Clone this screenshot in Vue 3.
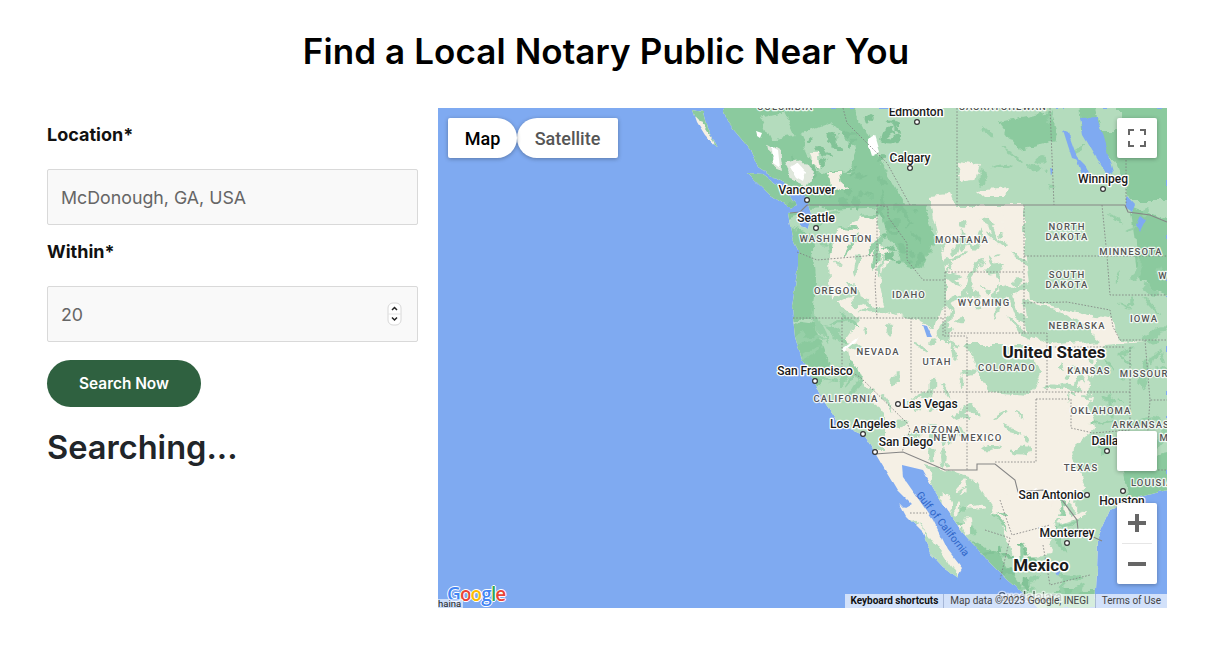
<script setup>
const land = 'M723 108 727 122 738 135 752 152 758 167 775 178 797 190 807 198 811 215 808 228 800 226 797 212 788 213 792 238 798 250 798 267 792 307 795 337 802 360 815 383 823 400 840 425 863 435 875 453 882 465 897 490 912 505 905 509 899 503 906 516 923 533 930 553 943 567 957 577 962 568 948 550 933 520 917 497 903 477 902 465 923 470 940 500 963 533 990 563 1007 580 1027 597 1037 608 1095 608 1097 570 1098 537 1110 510 1137 498 1167 490 1167 108Z M747 173 763 174 785 190 797 205 790 208 770 195Z M693 110 703 112 707 128 717 148 705 135 697 122Z'

const light = [
  'M800 100 1175 100 1175 345 1120 340 1110 320 1030 300 1024 250 1024 205 860 205Z',
  'M765 205 880 205 870 215 835 230 830 262 832 300 860 318 845 340 850 365 885 415 885 450 850 450 785 375 770 310Z',
  'M870 205 930 205 945 270 945 300 935 330 915 320 885 310 880 285 888 255Z',
  'M965 345 1030 345 1040 372 1030 395 990 392 975 370Z',
  'M1100 345 1175 340 1175 500 1120 515 1105 540 1105 615 1030 615 950 540 925 465 945 470 975 480 1000 520 1015 560 1050 555 1060 510 1085 490 1070 450 1095 430 1090 400Z',
  'M1024 300 1060 310 1100 340 1050 345 1030 335Z',
  'M925 530 950 565 965 585 945 575 920 545Z',
  'M895 510 925 530 905 522Z',
]
const mid = [
  'M685 100 850 100 880 160 905 205 810 210 785 218 735 175Z',
  'M877 205 925 205 935 240 925 270 905 265 890 240Z',
  'M780 225 812 235 815 280 812 320 780 320Z',
  'M780 320 815 325 832 372 815 390Z',
  'M1080 100 1175 100 1175 200 1130 200 1115 160 1082 130Z',
  'M1000 122 1050 112 1060 140 1020 150Z',
  'M1130 205 1175 222 1175 300 1140 280Z',
  'M1122 462 1175 450 1175 495 1130 502Z',
  'M945 525 1000 555 1040 615 1000 615 965 570 945 520Z',
  'M1050 590 1100 590 1100 612 1045 612Z',
]
const lightOver = [
  'M800 135 830 122 858 150 850 172 815 170Z',
  'M760 118 785 112 795 135 770 140Z',
  'M1095 108 1120 108 1120 130 1100 130Z',
]
const tan = [
  'M957 163 980 166 975 180 958 182Z',
  'M930 195 950 193 955 205 930 205Z',
  'M977 190 1007 187 1005 197 985 197Z',
  'M828 172 842 172 845 192 832 190Z',
  'M810 152 818 152 821 168 813 166Z',
  'M1000 495 1050 490 1055 530 1030 555 1015 530Z',
  'M1000 205 1022 205 1022 250 1005 230Z',
  'M1070 395 1090 400 1075 440 1060 445Z',
]
const snow = [
  'M772 147 778 150 780 168 773 163Z',
  'M790 167 798 163 806 172 803 181 796 177Z',
  'M867 140 875 135 880 152 872 156Z',
  'M756 130 762 132 760 137 757 135Z',
  'M858 338 860 335 856 342 844 352 842 349Z',
  'M1033 490 1036 488 1038 498 1034 497Z',
]
const water = [
  'M1080 118 1097 117 1113 172 1107 175 1083 135Z',
  'M1063 130 1068 132 1078 160 1072 158Z',
  'M1075 155 1085 165 1092 180 1082 175Z',
  'M1126 195 1135 205 1132 212 1126 208Z',
  'M923 325 927 326 932 337 927 337Z',
  'M1140 215 1146 220 1140 232 1136 225Z',
  'M1050 167 1053 170 1051 176Z',
  'M1055 570 1060 572 1058 576Z',
]

let seed = 7
const rnd = () => {
  seed = (seed * 16807) % 2147483647
  return seed / 2147483647
}
const streaks = (x, y, w, h, n, maxLen = 14) => {
  const out = []
  for (let i = 0; i < n; i++) {
    const cx = x + rnd() * w
    const cy = y + rnd() * h
    const len = 3 + rnd() * maxLen
    const wid = 1.2 + rnd() * 2.5
    const a = rnd() * 3.14
    const pts = []
    for (let k = 0; k < 8; k++) {
      const t = (k / 8) * 6.283
      const px = Math.cos(t) * len
      const py = Math.sin(t) * wid
      pts.push(`${(cx + px * Math.cos(a) - py * Math.sin(a)).toFixed(1)} ${(cy + px * Math.sin(a) + py * Math.cos(a)).toFixed(1)}`)
    }
    out.push(`M${pts.join(' ')}Z`)
  }
  return out.join(' ')
}
const lightStreaks = [
  streaks(925, 210, 100, 90, 34),
  streaks(835, 255, 50, 60, 12),
  streaks(845, 320, 125, 120, 30, 9),
  streaks(945, 275, 80, 60, 12),
  streaks(910, 395, 130, 70, 22, 8),
  streaks(1040, 350, 60, 60, 14),
].join(' ')
const midStreaks = [
  streaks(960, 110, 120, 80, 12, 18),
  streaks(1110, 210, 57, 140, 14, 10),
  streaks(1100, 350, 67, 130, 20),
  streaks(960, 500, 120, 105, 26),
  streaks(800, 320, 60, 80, 14),
  streaks(820, 210, 60, 50, 10),
].join(' ')
const tanStreaks = [
  streaks(1040, 490, 40, 50, 8),
  streaks(945, 480, 50, 50, 8),
].join(' ')
const darkStreaks = [
  streaks(790, 120, 110, 90, 40, 6),
  streaks(880, 210, 45, 60, 22, 6),
  streaks(985, 540, 50, 60, 16, 5),
].join(' ')

const dashes = [
  '797 252 817 260 877 255', '877 205 877 255 875 282 877 318', '793 318 943 318',
  '842 318 842 367 860 377 907 423 910 430 902 452', '911 318 911 392', '911 392 1130 392',
  '967 337 967 470', '943 318 943 336 967 336', '877 205 888 207 888 217 907 243 907 260 923 280 945 280',
  '945 272 1024 272 1024 333 945 333 945 272', '1024 205 1024 272', '1024 256 1107 256',
  '1102 205 1107 256 1110 295 1167 295', '1024 303 1067 302 1110 310 1113 327 1120 340 1167 340',
  '1024 333 1047 333 1047 347 1125 347', '1047 347 1047 392', '1130 347 1130 430',
  '1036 399 1036 462 995 462', '1036 399 1071 399 1071 428 1093 433 1130 430',
  '843 108 847 123 887 163 910 205', '957 108 957 205', '1050 108 1054 205', '1126 160 1126 205',
  '910 513 927 513', '1000 500 1012 535 1050 525', '985 530 1010 538 1000 580', '1043 545 1050 585 1090 575',
  '1145 340 1150 400 1167 400', '1150 400 1145 470 1167 470', '1107 256 1167 256',
]
const solids = [
  '807 205 1125 205 1128 212 1150 215 1167 222', '790 213 800 212 807 205',
  '875 454 903 452 945 470 977 470 977 464 995 464 1015 480 1018 492 1043 490 1062 500 1077 520 1078 530 1102 541',
]

const cities = [
  ['Edmonton', 916, 116, 917, 122], ['Calgary', 910, 162, 910, 168], ['Vancouver', 807, 194, 807, 200],
  ['Seattle', 816, 222, 816, 228], ['Winnipeg', 1103, 183, 1103, 189], ['San Francisco', 815, 375, 815, 381],
  ['Las Vegas', 930, 408, 898, 404], ['Los Angeles', 863, 428, 863, 434], ['San Diego', 906, 446, 875, 452],
  ['Dallas', 1108, 445, 1107, 451], ['Houston', 1122, 505, 1123, 491], ['San Antonio', 1051, 499, 1087, 495],
  ['Monterrey', 1067, 537, 1067, 543],
]
const states = [
  ['COLUMBIA', 785, 110], ['SASKATCHEWAN', 1003, 110], ['WASHINGTON', 836, 242], ['MONTANA', 962, 243],
  ['NORTH', 1067, 230], ['DAKOTA', 1067, 240], ['MINNESOTA', 1131, 255], ['SOUTH', 1067, 278], ['DAKOTA', 1067, 288],
  ['OREGON', 836, 294], ['IDAHO', 909, 298], ['WYOMING', 984, 306], ['NEBRASKA', 1077, 329], ['IOWA', 1144, 322],
  ['NEVADA', 878, 355], ['UTAH', 937, 365], ['COLORADO', 1007, 371], ['KANSAS', 1089, 374], ['MISSOURI', 1146, 377],
  ['CALIFORNIA', 846, 402], ['ARIZONA', 937, 433], ['NEW MEXICO', 968, 441], ['OKLAHOMA', 1101, 414],
  ['ARKANSAS', 1141, 428], ['TEXAS', 1081, 471], ['LOUISIANA', 1160, 486], ['WI', 1165, 279], ['MI', 1166, 441],
]
</script>

<template>
  <div class="page">
    <h1 class="title">Find a Local Notary Public Near You</h1>
    <div class="row">
      <form class="form" @submit.prevent>
        <label class="label">Location*</label>
        <input class="field" type="text" value="McDonough, GA, USA" readonly />
        <label class="label">Within*</label>
        <div class="numwrap">
          <input class="field" type="text" value="20" readonly />
          <span class="spin">
            <svg width="15" height="24" viewBox="0 0 15 24">
              <rect x="1" y="1" width="13" height="22" rx="5" fill="#fff" stroke="#d8d8d8" />
              <path d="M1 12H14" stroke="#e4e4e4" />
              <path d="M5 8 7.5 5.5 10 8M5 15.5 7.5 18 10 15.5" fill="none" stroke="#222" stroke-width="1.5" />
            </svg>
          </span>
        </div>
        <button class="search" type="button">Search Now</button>
        <h2 class="status">Searching...</h2>
      </form>

      <div class="map">
        <svg class="terrain" width="729" height="500" viewBox="438 108 729 500">
          <defs>
            <filter id="rough" filterUnits="userSpaceOnUse" x="438" y="108" width="729" height="500">
              <feTurbulence type="fractalNoise" baseFrequency="0.06" numOctaves="3" seed="4" />
              <feDisplacementMap in="SourceGraphic" scale="11" xChannelSelector="R" yChannelSelector="G" />
            </filter>
            <filter id="soft" filterUnits="userSpaceOnUse" x="430" y="100" width="745" height="516">
              <feTurbulence type="fractalNoise" baseFrequency="0.09" numOctaves="2" seed="9" />
              <feDisplacementMap in="SourceGraphic" scale="4" xChannelSelector="R" yChannelSelector="G" />
            </filter>
            <clipPath id="landclip"><path :d="land" /></clipPath>
          </defs>
          <rect x="438" y="108" width="729" height="500" fill="#7faaf1" />
          <g filter="url(#soft)">
            <path :d="land" fill="#f5f0e5" />
            <g clip-path="url(#landclip)">
              <g filter="url(#rough)">
                <path v-for="(d, i) in light" :key="'l' + i" :d="d" fill="#b4dcbd" />
                <path :d="lightStreaks" fill="#b4dcbd" />
                <path v-for="(d, i) in mid" :key="'m' + i" :d="d" fill="#8bca9e" />
                <path :d="midStreaks" fill="#97d0a8" />
                <path v-for="(d, i) in lightOver" :key="'o' + i" :d="d" fill="#b4dcbd" />
                <path :d="darkStreaks" fill="#82c397" />
                <path v-for="(d, i) in tan" :key="'t' + i" :d="d" fill="#f5f0e5" />
                <path :d="tanStreaks" fill="#f5f0e5" />
                <path d="M767 143 779 150 782 170 770 165Z M786 162 800 158 812 172 806 186 792 180Z" fill="#dfe7dc" />
              </g>
              <path v-for="(d, i) in snow" :key="'s' + i" :d="d" fill="#fff" />
            </g>
            <path v-for="(d, i) in water" :key="'w' + i" :d="d" fill="#7faaf1" />
          </g>
          <polyline v-for="(p, i) in dashes" :key="'d' + i" class="dash" :points="p" />
          <polyline v-for="(p, i) in solids" :key="'b' + i" class="border" :points="p" />
          <text v-for="(s, i) in states" :key="'st' + i" class="state" :x="s[1]" :y="s[2]">{{ s[0] }}</text>
          <text class="gulf" transform="translate(940 526) rotate(52)">Gulf of California</text>
          <g v-for="c in cities" :key="c[0]">
            <text class="city" :x="c[1]" :y="c[2]">{{ c[0] }}</text>
            <circle class="dot" :cx="c[3]" :cy="c[4]" r="2.4" />
          </g>
          <text class="country" x="1054" y="358">United States</text>
          <text class="country" x="1041" y="571">Mexico</text>
          <text class="city faded" x="1030" y="601">Guadalajara</text>
        </svg>

        <div class="types">
          <button class="type type-map" type="button">Map</button>
          <button class="type type-sat" type="button">Satellite</button>
        </div>

        <button class="ctl ctl-full" type="button" aria-label="Fullscreen">
          <svg width="18" height="18" viewBox="0 0 18 18">
            <path d="M1 6V1H6M12 1H17V6M17 12V17H12M6 17H1V12" fill="none" stroke="#666" stroke-width="2" />
          </svg>
        </button>
        <div class="ctl ctl-blank"></div>
        <div class="zoom">
          <button class="zbtn" type="button" aria-label="Zoom in">
            <svg width="18" height="18" viewBox="0 0 18 18"><path d="M0 7H7V0H11V7H18V11H11V18H7V11H0Z" fill="#666" /></svg>
          </button>
          <span class="zsep"></span>
          <button class="zbtn" type="button" aria-label="Zoom out">
            <svg width="18" height="18" viewBox="0 0 18 18"><path d="M0 7H18V11H0Z" fill="#666" /></svg>
          </button>
        </div>

        <div class="logo"><span class="b">G</span><span class="r">o</span><span class="y">o</span><span class="b">g</span><span class="g">l</span><span class="r">e</span></div>
        <div class="china">haina</div>

        <div class="attr">
          <span class="cell strong">Keyboard shortcuts</span>
          <span class="cell">Map data ©2023 Google, INEGI</span>
          <span class="cell">Terms of Use</span>
        </div>
      </div>
    </div>
  </div>
</template>

<style scoped>
.page {
  width: 1207px;
  height: 648px;
  background: #fff;
  overflow: hidden;
  font-family: Inter, "Noto Sans", sans-serif;
  color: #111;
}
.title {
  margin: 0;
  height: 108px;
  padding: 0 0 6px 5px;
  box-sizing: border-box;
  display: flex;
  align-items: center;
  justify-content: center;
  font-size: 35px;
  font-weight: 600;
  letter-spacing: 0.1px;
  color: #000;
}
.row {
  display: flex;
  gap: 20px;
  padding-left: 47px;
}
.form {
  width: 371px;
  flex: none;
  display: flex;
  flex-direction: column;
}
.label {
  margin: 14px 0 21px;
  height: 26px;
  line-height: 26px;
  font-size: 18px;
  font-weight: 700;
  color: #111;
}
.field {
  display: block;
  width: 100%;
  height: 56px;
  box-sizing: border-box;
  padding: 1px 13px 0;
  background: #f9f9f9;
  border: 1px solid #d9d9d9;
  border-radius: 2px;
  font: 400 17.8px Inter, "Noto Sans", sans-serif;
  color: #666;
  outline: none;
}
.numwrap {
  position: relative;
}
.spin {
  position: absolute;
  right: 16px;
  top: 16px;
  line-height: 0;
}
.search {
  margin-top: 18px;
  width: 154px;
  height: 47px;
  border: none;
  border-radius: 24px;
  background: #2f6140;
  color: #fff;
  font: 600 15.4px Inter, "Noto Sans", sans-serif;
}
.status {
  margin: 15px 0 0;
  height: 50px;
  line-height: 50px;
  font-size: 32.6px;
  font-weight: 600;
  color: #212529;
}
.map {
  position: relative;
  width: 729px;
  height: 500px;
  flex: none;
  overflow: hidden;
}
.terrain {
  display: block;
}
.dash {
  fill: none;
  stroke: #7c7c7c;
  stroke-width: 0.8;
  stroke-dasharray: 1.6 1.6;
}
.border {
  fill: none;
  stroke: #858585;
  stroke-width: 1.1;
}
.state,
.city,
.country {
  text-anchor: middle;
  font-family: Roboto, sans-serif;
  paint-order: stroke;
  stroke: #fff;
  stroke-linejoin: round;
}
.state {
  font-size: 9.5px;
  font-weight: 500;
  letter-spacing: 1.1px;
  fill: #555;
  stroke-width: 2.4px;
  stroke-opacity: 0.85;
}
.city {
  font-size: 12px;
  font-weight: 500;
  fill: #1a1a1a;
  stroke-width: 2.6px;
}
.faded {
  opacity: 0.55;
}
.country {
  font-size: 17px;
  font-weight: 700;
  fill: #1a1a1a;
  stroke-width: 3px;
}
.dot {
  fill: #fff;
  stroke: #333;
  stroke-width: 1.2;
}
.gulf {
  text-anchor: middle;
  font-family: Roboto, sans-serif;
  font-size: 10.5px;
  fill: #2f66c8;
}
.types {
  position: absolute;
  left: 10px;
  top: 10px;
  display: flex;
}
.type {
  height: 40px;
  border: none;
  background: #fff;
  font: 500 18px Roboto, sans-serif;
  box-shadow: 0 1px 4px rgba(0, 0, 0, 0.3);
}
.type-map {
  width: 69px;
  color: #000;
  border-radius: 2px 20px 20px 2px;
  position: relative;
  z-index: 1;
}
.type-sat {
  width: 101px;
  color: #565656;
  border-radius: 20px 2px 2px 20px;
}
.ctl {
  position: absolute;
  right: 10px;
  width: 40px;
  height: 40px;
  border: none;
  padding: 0;
  background: #fff;
  border-radius: 2px;
  box-shadow: 0 1px 4px rgba(0, 0, 0, 0.3);
  display: flex;
  align-items: center;
  justify-content: center;
}
.ctl-full {
  top: 10px;
}
.ctl-blank {
  top: 323px;
}
.zoom {
  position: absolute;
  right: 10px;
  top: 395px;
  width: 40px;
  height: 81px;
  background: #fff;
  border-radius: 2px;
  box-shadow: 0 1px 4px rgba(0, 0, 0, 0.3);
  display: flex;
  flex-direction: column;
  align-items: center;
}
.zbtn {
  width: 40px;
  height: 40px;
  padding: 0;
  border: none;
  background: none;
  display: flex;
  align-items: center;
  justify-content: center;
}
.zsep {
  width: 30px;
  height: 1px;
  background: #e6e6e6;
  flex: none;
}
.logo {
  position: absolute;
  left: 9px;
  bottom: 2px;
  font: 600 19px/24px "Open Sans", sans-serif;
  letter-spacing: -0.9px;
  text-shadow: 1px 0 #fff, -1px 0 #fff, 0 1px #fff, 0 -1px #fff;
}
.b { color: #4285f4; }
.r { color: #ea4335; }
.y { color: #fbbc05; }
.g { color: #34a853; }
.china {
  position: absolute;
  left: 0;
  bottom: 0;
  font: 400 9.5px/9px Roboto, sans-serif;
  color: #222;
  background: rgba(255, 255, 255, 0.6);
  padding-right: 2px;
}
.attr {
  position: absolute;
  right: 0;
  bottom: 0;
  height: 14px;
  display: flex;
  background: rgba(255, 255, 255, 0.65);
  font: 400 10px/14px Roboto, sans-serif;
  color: #444;
}
.cell {
  padding: 0 6px;
  border-left: 1px solid rgba(120, 140, 180, 0.5);
  white-space: nowrap;
}
.cell:first-child {
  border-left: none;
  padding: 0 5px;
}
.strong {
  font-weight: 700;
  color: #111;
}
</style>
